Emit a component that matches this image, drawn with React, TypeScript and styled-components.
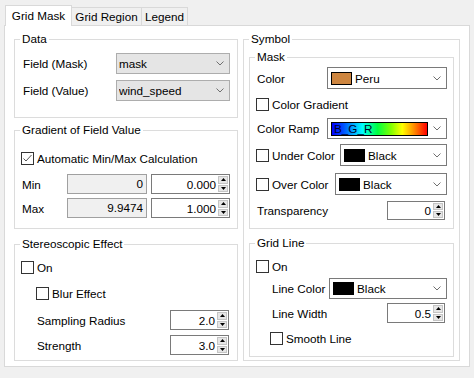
import React from "react";
import styled, { createGlobalStyle } from "styled-components";

const Global = createGlobalStyle`
  html, body { margin: 0; padding: 0; background: #f0f0f0; }
  body { font-family: "Liberation Sans", Arial, sans-serif; font-size: 11.7px; color: #000; }
  * { box-sizing: border-box; }
`;

const Window = styled.div`
  width: 474px;
  height: 378px;
  padding: 5px 0 0 4px;
`;

const TabStrip = styled.div`
  display: flex;
  align-items: flex-end;
  height: 20px;
  position: relative;
  z-index: 1;
`;

const Tab = styled.div<{ $active?: boolean; $w: number }>`
  width: ${(p) => p.$w}px;
  height: ${(p) => (p.$active ? 21 : 18)}px;
  margin-bottom: ${(p) => (p.$active ? -1 : 0)}px;
  margin-left: ${(p) => (p.$active ? 1 : 0)}px;
  border: 1px solid #d9d9d9;
  border-bottom: none;
  border-left: ${(p) => (p.$active ? "1px solid #d9d9d9" : "none")};
  background: ${(p) => (p.$active ? "#fff" : "#f0f0f0")};
  display: flex;
  align-items: center;
  justify-content: center;
  padding-bottom: ${(p) => (p.$active ? 2 : 0)}px;
  white-space: nowrap;
`;

const Panel = styled.div`
  width: 466px;
  height: 342px;
  background: #fff;
  border: 1px solid #d9d9d9;
  padding: 13px 9px 0 9px;
  display: grid;
  grid-template-columns: 224px 217px;
  column-gap: 5px;
  align-items: start;
`;

const Column = styled.div`
  display: flex;
  flex-direction: column;
`;

const Group = styled.div<{ $h: number; $mt?: number; $inset?: number }>`
  position: relative;
  border: 1px solid #dcdcdc;
  height: ${(p) => p.$h}px;
  margin-top: ${(p) => p.$mt ?? 0}px;
  margin-left: ${(p) => p.$inset ?? 0}px;
  margin-right: ${(p) => p.$inset ?? 0}px;
`;

const GroupTitle = styled.span`
  position: absolute;
  top: -8px;
  left: 5px;
  padding: 0 2px;
  background: #fff;
  line-height: 14px;
  white-space: nowrap;
`;

const Body = styled.div<{ $pt: number; $pl: number }>`
  display: flex;
  flex-direction: column;
  padding-top: ${(p) => p.$pt}px;
  padding-left: ${(p) => p.$pl}px;
`;

const Row = styled.div<{ $h: number; $mt?: number; $pl?: number }>`
  display: flex;
  align-items: center;
  height: ${(p) => p.$h}px;
  margin-top: ${(p) => p.$mt ?? 0}px;
  padding-left: ${(p) => p.$pl ?? 0}px;
  white-space: nowrap;
`;

const Label = styled.span<{ $w: number }>`
  width: ${(p) => p.$w}px;
  flex: none;
  white-space: nowrap;
`;

const CheckWrap = styled.label<{ $w?: number }>`
  display: flex;
  align-items: center;
  gap: 3px;
  ${(p) => (p.$w ? `width: ${p.$w}px; flex: none;` : "")}
`;

const Box = styled.span`
  width: 13px;
  height: 13px;
  flex: none;
  border: 1px solid #333;
  background: #fff;
  display: flex;
  align-items: center;
  justify-content: center;
`;

const Check = ({ checked, children, w }: { checked?: boolean; children: React.ReactNode; w?: number }) => (
  <CheckWrap $w={w}>
    <Box>
      {checked && (
        <svg width="11" height="11" viewBox="0 0 11 11">
          <polyline points="1.5,5.5 4,8 9.5,2" fill="none" stroke="#555" strokeWidth="1" />
        </svg>
      )}
    </Box>
    <span>{children}</span>
  </CheckWrap>
);

const ComboBox = styled.div<{ $w: number; $h: number; $gray?: boolean }>`
  width: ${(p) => p.$w}px;
  height: ${(p) => p.$h}px;
  flex: none;
  border: 1px solid ${(p) => (p.$gray ? "#adadad" : "#7a7a7a")};
  background: ${(p) => (p.$gray ? "#e5e5e5" : "#fff")};
  display: flex;
  align-items: center;
  padding-left: 2px;
`;

const ComboText = styled.span`
  flex: 1;
  white-space: nowrap;
  overflow: hidden;
`;

const Chevron = () => (
  <svg width="8" height="5" viewBox="0 0 8 5" style={{ marginRight: 5, flex: "none" }}>
    <polyline points="0.5,0.5 4,4 7.5,0.5" fill="none" stroke="#707070" strokeWidth="1" />
  </svg>
);

const Swatch = styled.span<{ $color: string }>`
  width: 21px;
  height: 13px;
  flex: none;
  background: ${(p) => p.$color};
  border: 1px solid #000;
  margin: 0 3px 0 1px;
`;

const Ramp = styled.span`
  width: 97px;
  height: 14px;
  flex: none;
  margin-left: 1px;
  border: 1px solid #000;
  background: linear-gradient(
    to right,
    #0000ff 0%,
    #0050ff 12%,
    #00ffff 32%,
    #00ff40 48%,
    #80ff00 62%,
    #ffff00 74%,
    #ff9000 86%,
    #ff0000 100%
  );
  color: #00002a;
  line-height: 11px;
  padding-left: 2px;
  margin-right: auto;
  overflow: visible;
`;

const Combo = ({
  w,
  h,
  gray,
  swatch,
  ramp,
  children,
}: {
  w: number;
  h: number;
  gray?: boolean;
  swatch?: string;
  ramp?: boolean;
  children: React.ReactNode;
}) => (
  <ComboBox $w={w} $h={h} $gray={gray}>
    {swatch && <Swatch $color={swatch} />}
    {ramp ? <Ramp>{children}</Ramp> : <ComboText>{children}</ComboText>}
    <Chevron />
  </ComboBox>
);

const ReadBox = styled.div<{ $w: number }>`
  width: ${(p) => p.$w}px;
  height: 20px;
  flex: none;
  border: 1px solid #a0a0a0;
  background: #f0f0f0;
  text-align: right;
  padding-right: 3px;
  line-height: 18px;
  margin-right: 4px;
`;

const NumBox = styled.div<{ $w: number; $h: number }>`
  width: ${(p) => p.$w}px;
  height: ${(p) => p.$h}px;
  flex: none;
  border: 1px solid #7a7a7a;
  background: #fff;
  display: flex;
  align-items: stretch;
  padding: 1px;
`;

const NumValue = styled.span`
  flex: 1;
  padding-right: 2px;
  display: flex;
  align-items: center;
  justify-content: flex-end;
`;

const SpinCol = styled.span`
  width: 10px;
  display: flex;
  flex-direction: column;
  gap: 1px;
`;

const SpinBtn = styled.span`
  flex: 1;
  background: #e6e6e6;
  border: 1px solid #c4c4c4;
  display: flex;
  align-items: center;
  justify-content: center;
`;

const Tri = ({ down }: { down?: boolean }) => (
  <svg width="5" height="3" viewBox="0 0 5 3">
    <polygon points={down ? "0,0 5,0 2.5,3" : "0,3 5,3 2.5,0"} fill="#000" />
  </svg>
);

const Spinner = ({ w, h = 20, value }: { w: number; h?: number; value: string }) => (
  <NumBox $w={w} $h={h}>
    <NumValue>{value}</NumValue>
    <SpinCol>
      <SpinBtn>
        <Tri />
      </SpinBtn>
      <SpinBtn>
        <Tri down />
      </SpinBtn>
    </SpinCol>
  </NumBox>
);

export default function App() {
  return (
    <Window>
      <Global />
      <TabStrip>
        <Tab $active $w={67}>Grid Mask</Tab>
        <Tab $w={70}>Grid Region</Tab>
        <Tab $w={46}>Legend</Tab>
      </TabStrip>
      <Panel>
        <Column>
          <Group $h={79}>
            <GroupTitle>Data</GroupTitle>
            <Body $pt={13} $pl={8}>
              <Row $h={21}>
                <Label $w={93}>Field (Mask)</Label>
                <Combo w={114} h={21} gray>mask</Combo>
              </Row>
              <Row $h={21} $mt={6}>
                <Label $w={93}>Field (Value)</Label>
                <Combo w={114} h={21} gray>wind_speed</Combo>
              </Row>
            </Body>
          </Group>
          <Group $h={99} $mt={12}>
            <GroupTitle>Gradient of Field Value</GroupTitle>
            <Body $pt={21} $pl={6}>
              <Row $h={13}>
                <Check checked>Automatic Min/Max Calculation</Check>
              </Row>
              <Row $h={20} $mt={9} $pl={1}>
                <Label $w={45}>Min</Label>
                <ReadBox $w={80}>0</ReadBox>
                <Spinner w={79} value="0.000" />
              </Row>
              <Row $h={20} $mt={4} $pl={1}>
                <Label $w={45}>Max</Label>
                <ReadBox $w={80}>9.9474</ReadBox>
                <Spinner w={79} value="1.000" />
              </Row>
            </Body>
          </Group>
          <Group $h={117} $mt={15}>
            <GroupTitle>Stereoscopic Effect</GroupTitle>
            <Body $pt={16} $pl={6}>
              <Row $h={13}>
                <Check>On</Check>
              </Row>
              <Row $h={13} $mt={13} $pl={15}>
                <Check>Blur Effect</Check>
              </Row>
              <Row $h={20} $mt={10} $pl={16}>
                <Label $w={133}>Sampling Radius</Label>
                <Spinner w={59} value="2.0" />
              </Row>
              <Row $h={20} $mt={5} $pl={16}>
                <Label $w={133}>Strength</Label>
                <Spinner w={59} value="3.0" />
              </Row>
            </Body>
          </Group>
        </Column>
        <Column>
          <Group $h={322}>
            <GroupTitle>Symbol</GroupTitle>
            <Body $pt={17} $pl={0}>
              <Group $h={172} $inset={5}>
                <GroupTitle>Mask</GroupTitle>
                <Body $pt={9} $pl={6}>
                  <Row $h={22} $pl={1}>
                    <Label $w={70}>Color</Label>
                    <Combo w={120} h={22} swatch="#cd853f">Peru</Combo>
                  </Row>
                  <Row $h={13} $mt={9}>
                    <Check>Color Gradient</Check>
                  </Row>
                  <Row $h={21} $mt={7} $pl={1}>
                    <Label $w={70}>Color Ramp</Label>
                    <Combo w={120} h={21} ramp>B_G_R</Combo>
                  </Row>
                  <Row $h={22} $mt={5}>
                    <Check w={84}>Under Color</Check>
                    <Combo w={107} h={22} swatch="#000">Black</Combo>
                  </Row>
                  <Row $h={22} $mt={7}>
                    <Check w={79}>Over Color</Check>
                    <Combo w={112} h={22} swatch="#000">Black</Combo>
                  </Row>
                  <Row $h={19} $mt={6} $pl={1}>
                    <Label $w={130}>Transparency</Label>
                    <Spinner w={58} h={19} value="0" />
                  </Row>
                </Body>
              </Group>
              <Group $h={114} $mt={14} $inset={5}>
                <GroupTitle>Grid Line</GroupTitle>
                <Body $pt={16} $pl={6}>
                  <Row $h={13}>
                    <Check>On</Check>
                  </Row>
                  <Row $h={21} $mt={5} $pl={16}>
                    <Label $w={57}>Line Color</Label>
                    <Combo w={118} h={21} swatch="#000">Black</Combo>
                  </Row>
                  <Row $h={20} $mt={4} $pl={16}>
                    <Label $w={115}>Line Width</Label>
                    <Spinner w={58} value="0.5" />
                  </Row>
                  <Row $h={13} $mt={9} $pl={14}>
                    <Check>Smooth Line</Check>
                  </Row>
                </Body>
              </Group>
            </Body>
          </Group>
        </Column>
      </Panel>
    </Window>
  );
}
